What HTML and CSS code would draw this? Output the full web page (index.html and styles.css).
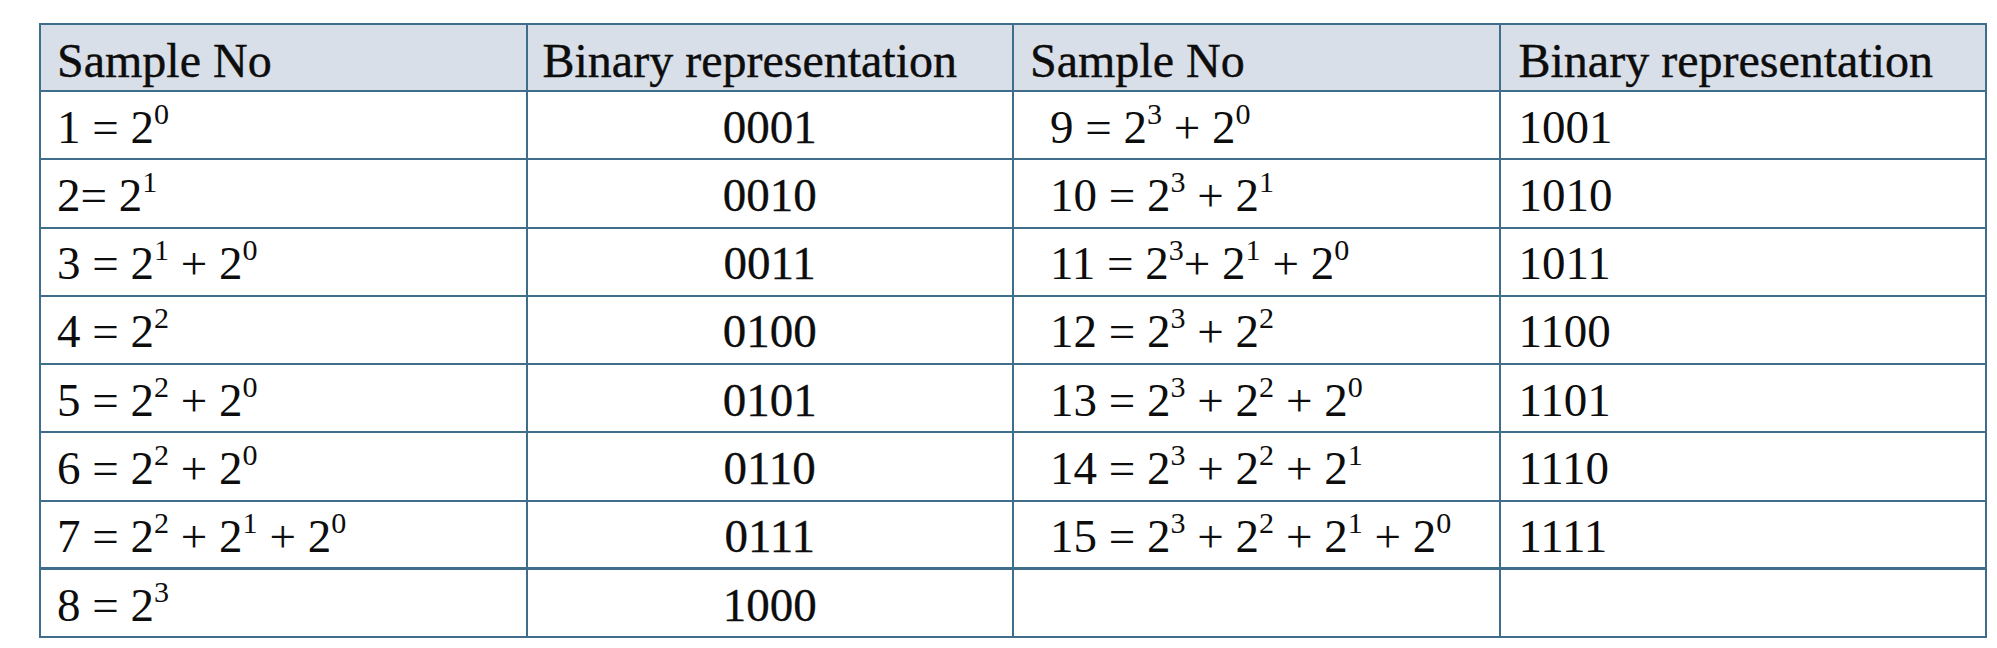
FILE: index.html
```html
<!DOCTYPE html>
<html lang="en">
<head>
<meta charset="utf-8">
<title>Binary representation table</title>
<link rel="stylesheet" href="styles.css">
</head>
<body>
<table class="bin-table">
  <thead>
    <tr class="head-row">
      <th class="c-sample">Sample No</th>
      <th class="c-bin">Binary representation</th>
      <th class="c-sample2">Sample No</th>
      <th class="c-bin2">Binary representation</th>
    </tr>
  </thead>
  <tbody>
    <tr>
      <td class="c-sample">1 = 2<sup>0</sup></td>
      <td class="c-bin center">0001</td>
      <td class="c-sample2">9 = 2<sup>3</sup> + 2<sup>0</sup></td>
      <td class="c-bin2">1001</td>
    </tr>
    <tr>
      <td class="c-sample">2= 2<sup>1</sup></td>
      <td class="c-bin center">0010</td>
      <td class="c-sample2">10 = 2<sup>3</sup> + 2<sup>1</sup></td>
      <td class="c-bin2">1010</td>
    </tr>
    <tr>
      <td class="c-sample">3 = 2<sup>1</sup> + 2<sup>0</sup></td>
      <td class="c-bin center">0011</td>
      <td class="c-sample2">11 = 2<sup>3</sup>+ 2<sup>1</sup> + 2<sup>0</sup></td>
      <td class="c-bin2">1011</td>
    </tr>
    <tr>
      <td class="c-sample">4 = 2<sup>2</sup></td>
      <td class="c-bin center">0100</td>
      <td class="c-sample2">12 = 2<sup>3</sup> + 2<sup>2</sup></td>
      <td class="c-bin2">1100</td>
    </tr>
    <tr>
      <td class="c-sample">5 = 2<sup>2</sup> + 2<sup>0</sup></td>
      <td class="c-bin center">0101</td>
      <td class="c-sample2">13 = 2<sup>3</sup> + 2<sup>2</sup> + 2<sup>0</sup></td>
      <td class="c-bin2">1101</td>
    </tr>
    <tr>
      <td class="c-sample">6 = 2<sup>2</sup> + 2<sup>0</sup></td>
      <td class="c-bin center">0110</td>
      <td class="c-sample2">14 = 2<sup>3</sup> + 2<sup>2</sup> + 2<sup>1</sup></td>
      <td class="c-bin2">1110</td>
    </tr>
    <tr class="thick-bottom">
      <td class="c-sample">7 = 2<sup>2</sup> + 2<sup>1</sup> + 2<sup>0</sup></td>
      <td class="c-bin center">0111</td>
      <td class="c-sample2">15 = 2<sup>3</sup> + 2<sup>2</sup> + 2<sup>1</sup> + 2<sup>0</sup></td>
      <td class="c-bin2">1111</td>
    </tr>
    <tr>
      <td class="c-sample">8 = 2<sup>3</sup></td>
      <td class="c-bin center">1000</td>
      <td class="c-sample2"></td>
      <td class="c-bin2"></td>
    </tr>
  </tbody>
</table>
</body>
</html>
```

FILE: styles.css
```css
html, body {
  margin: 0;
  padding: 0;
  background: #ffffff;
}

body {
  padding: 23px 0 0 39px;
  font-family: "Liberation Serif", "Times New Roman", serif;
  color: #0d0d0d;
}

.bin-table {
  border-collapse: collapse;
  width: 1948px;
  table-layout: fixed;
  border: 2px solid #3e6e8c;
}

.bin-table th,
.bin-table td {
  border: 2px solid #3e6e8c;
  padding: 0 0 0 16px;
  text-align: left;
  vertical-align: middle;
  white-space: nowrap;
  overflow: hidden;
}

.bin-table th {
  font-weight: normal;
  font-size: 48px;
  background: #d9dfe8;
  padding-top: 5px;
  -webkit-text-stroke: 0.4px #0d0d0d;
}

.head-row {
  height: 67px;
}

.bin-table tbody tr {
  height: 68.25px;
}

.bin-table td {
  font-size: 47px;
  padding-top: 3px;
}

.bin-table .c-sample2 {
  padding-left: 36px;
}

.bin-table th.c-sample2 {
  padding-left: 16px;
}

.bin-table .c-bin2 {
  padding-left: 18px;
}

.bin-table th.c-bin {
  padding-left: 15px;
}

.bin-table td.center {
  text-align: center;
  padding-left: 0;
  -webkit-text-stroke: 0.3px #0d0d0d;
}

.bin-table tr.thick-bottom td {
  border-bottom-width: 3px;
}

sup {
  font-size: 0.64em;
  line-height: 0;
  vertical-align: 0.62em;
}
```
